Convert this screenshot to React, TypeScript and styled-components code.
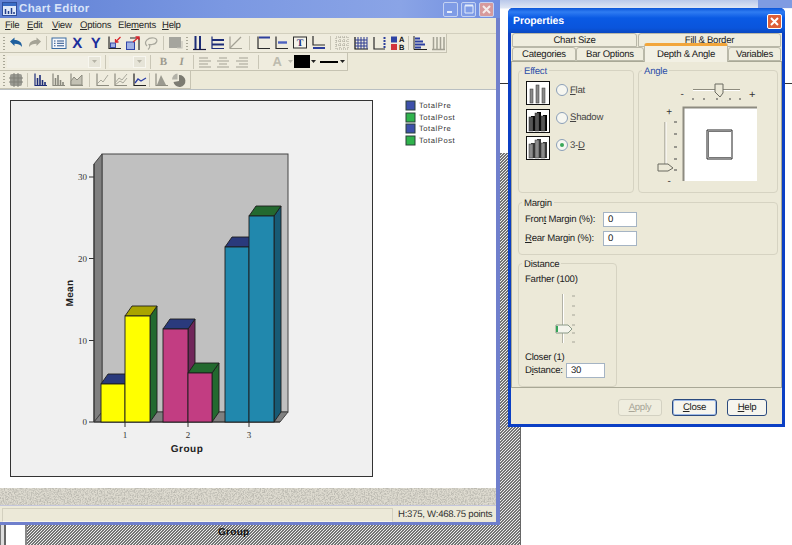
import React from "react";
import styled, { createGlobalStyle } from "styled-components";

const UI = `"Liberation Sans", Arial, sans-serif`;
const NAVY = "#1c2c78";
const DIM = "#a3a194";

const Global = createGlobalStyle`
  html, body { margin: 0; padding: 0; background: #fff; }
  * { box-sizing: border-box; }
  u { text-underline-offset: 1px; }
`;

const Desktop = styled.div`
  position: relative;
  width: 792px;
  height: 545px;
  overflow: hidden;
  background: #fff;
  font-family: ${UI};
  font-size: 9.6px;
  letter-spacing: -0.26px;
  text-rendering: geometricPrecision;
  color: #222;
`;

const BackTopStrip = styled.div`
  position: absolute;
  left: 500px;
  top: 0;
  width: 292px;
  height: 84px;
  border-bottom: 1px solid #333;
  background: linear-gradient(#b9c8ea 0, #dfe6f4 8px, #fff 9px);
`;

const BackTopButton = styled.div`
  position: absolute;
  left: 758px;
  top: 0;
  width: 34px;
  height: 8px;
  background: #7f9be2;
`;

const BackHatch = styled.div`
  position: absolute;
  left: 27px;
  top: 153px;
  width: 494px;
  height: 392px;
  border-right: 1px solid #666;
  background: repeating-linear-gradient(135deg, #747474 0 0.95px, #eeeeee 0.95px 2.1213px);
  display: flex;
  align-items: flex-end;
`;

const BackCaption = styled.span`
  width: 100%;
  padding: 0 0 7px 191px;
  font: bold 10px ${UI};
  letter-spacing: 0.3px;
  color: #111;
`;

const BackEdge = styled.div`
  position: absolute;
  left: 0;
  top: 525px;
  width: 27px;
  height: 20px;
  background: linear-gradient(90deg, #777 0 1px, #ddd 1px 4px, #666 4px 6px, #fff 6px 25px, #888 25px 27px);
`;

const MainWindow = styled.section`
  position: absolute;
  left: 0;
  top: 0;
  width: 500px;
  height: 525px;
  display: flex;
  flex-direction: column;
`;

const MainTitle = styled.header`
  height: 18px;
  flex: none;
  display: flex;
  align-items: center;
  padding-left: 2px;
  background: linear-gradient(90deg, #5f80d4 0, #7b98e2 45%, #8aa4e6 80%, #6f8de0 100%);
`;

const TitleText = styled.span`
  margin-left: 2px;
  font: bold 11.5px ${UI};
  letter-spacing: 0.35px;
  color: #d9e4f8;
`;

const TitleButtons = styled.div`
  margin-left: auto;
  padding-right: 6px;
  display: flex;
  gap: 3px;
`;

const CapButton = styled.span<{ $close?: boolean }>`
  width: 15px;
  height: 15px;
  border-radius: 2px;
  border: 1px solid #c4d2f2;
  display: flex;
  align-items: center;
  justify-content: center;
  background: ${(p) => (p.$close ? "#d79a9c" : "#7f9ce6")};
`;

const MainBody = styled.div`
  flex: 1;
  min-height: 0;
  display: flex;
  flex-direction: column;
  border-right: 4px solid #6f7fcc;
  border-bottom: 3px solid #6f7fcc;
  background: #ece9d8;
`;

const MenuBar = styled.nav`
  height: 16px;
  flex: none;
  display: flex;
  align-items: center;
  border-bottom: 1px solid #d2cfbe;
`;

const MenuItem = styled.span<{ $w: number }>`
  width: ${(p) => p.$w}px;
  padding-left: 5px;
  color: #2a2a2a;
`;

const ToolRow = styled.div<{ $h: number }>`
  height: ${(p) => p.$h}px;
  flex: none;
  display: flex;
`;

const Band = styled.div<{ $w: number }>`
  width: ${(p) => p.$w}px;
  display: flex;
  align-items: center;
  padding-left: 2px;
  background: #efecde;
  border-right: 1px solid #c6c3b2;
  border-bottom: 1px solid #c6c3b2;
`;

const Grip = styled.span`
  width: 5px;
  height: 13px;
  flex: none;
  background: repeating-linear-gradient(#a9a797 0 1px, transparent 1px 3px) 1px 0 / 2px 100% no-repeat;
`;

const Tool = styled.span<{ $w?: number }>`
  width: ${(p) => p.$w ?? 18.4}px;
  height: 16px;
  flex: none;
  display: flex;
  align-items: center;
  justify-content: center;
`;

const ToolGap = styled.span<{ $w: number }>`
  width: ${(p) => p.$w}px;
  height: 14px;
  flex: none;
  background: linear-gradient(#c9c6b6, #c9c6b6) center / 1px 100% no-repeat;
`;

const Combo = styled.span<{ $w: number }>`
  width: ${(p) => p.$w}px;
  height: 12px;
  flex: none;
  display: flex;
  justify-content: flex-end;
  background: #f1efe5;
`;

const ComboArrow = styled.span`
  width: 13px;
  height: 100%;
  display: flex;
  align-items: center;
  justify-content: center;
  background: #e6e4d8;
  border: 1px solid #f7f6ef;
`;

const FontTool = styled(Tool)<{ $italic?: boolean; $sans?: boolean }>`
  font: ${(p) => (p.$italic ? "italic" : "normal")} bold ${(p) => (p.$sans ? "13px" : "11px")}
    ${(p) => (p.$sans ? UI : `"Liberation Serif", serif`)};
  color: ${(p) => (p.$sans ? "#bdbbae" : "#9d9b8e")};
`;

const AxisLetter = styled(Tool)`
  font: bold 15px ${UI};
  letter-spacing: 0;
  color: #1c2f9c;
`;

const ColourChip = styled.span`
  width: 16px;
  height: 13px;
  flex: none;
  background: #000;
`;

const ChartPane = styled.div`
  height: 399px;
  flex: none;
  background: #fff;
  border-top: 1px solid #b9bfc2;
  overflow: hidden;
`;

const NoiseStrip = styled.div`
  height: 17px;
  flex: none;
  overflow: hidden;
  background: #d4d1c6;
  svg { display: block; }
`;

const StatusBar = styled.footer`
  flex: 1;
  display: flex;
  padding: 2px 0 0 2px;
  border-top: 1px solid #c4c6dc;
`;

const StatusWell = styled.span`
  flex: 1;
  border: 1px solid #d3d0bf;
  border-bottom-color: #f6f5ec;
`;

const StatusText = styled.span`
  width: 103px;
  padding-left: 5px;
  line-height: 13px;
  white-space: nowrap;
  color: #333;
`;

/* ---------- Properties dialog ---------- */

const Dialog = styled.section`
  position: absolute;
  left: 508px;
  top: 8px;
  width: 277px;
  height: 419px;
  display: flex;
  flex-direction: column;
  border: 3px solid #0b3fc4;
  border-top: 0;
  border-radius: 5px 5px 0 0;
  background: #ece9d8;
`;

const DialogTitle = styled.header`
  height: 25px;
  flex: none;
  margin: 0 -3px;
  padding: 0 3px 0 5px;
  display: flex;
  align-items: center;
  justify-content: space-between;
  border-radius: 5px 5px 0 0;
  background: linear-gradient(#0a54d8 0, #2f7cf2 4px, #0a5ae4 10px, #0a55dc 20px, #0a48c0 25px);
  font: bold 10.5px ${UI};
  letter-spacing: -0.1px;
  color: #fff;
`;

const DialogClose = styled.span`
  width: 15px;
  height: 15px;
  margin-top: 2px;
  border-radius: 2px;
  border: 1px solid #fff;
  display: flex;
  align-items: center;
  justify-content: center;
  background: #de5f38;
`;

const TabRows = styled.div`
  flex: none;
  padding: 0 1px;
  display: flex;
  flex-direction: column;
`;

const TabRow = styled.div<{ $gap: number }>`
  height: 14px;
  display: flex;
  align-items: flex-end;
  gap: ${(p) => p.$gap}px;
`;

const Tab = styled.span<{ $w: number; $active?: boolean }>`
  width: ${(p) => p.$w}px;
  height: ${(p) => (p.$active ? 19 : 14)}px;
  margin-bottom: ${(p) => (p.$active ? -1 : 0)}px;
  flex: none;
  display: flex;
  align-items: center;
  justify-content: center;
  z-index: ${(p) => (p.$active ? 1 : 0)};
  border: 1px solid #b9b8a8;
  border-bottom: ${(p) => (p.$active ? "0" : "1px solid #b9b8a8")};
  border-top: ${(p) => (p.$active ? "3px solid #f2a63a" : "1px solid #b9b8a8")};
  border-radius: 3px 3px 0 0;
  background: ${(p) => (p.$active ? "#f2f0e4" : "#efedde")};
  color: #222;
`;

const Panel = styled.div`
  height: 327px;
  flex: none;
  padding: 8px 5px 0 6px;
  display: flex;
  flex-direction: column;
  border: 1px solid #a9a896;
  background: #ece9d8;
`;

const GroupRow = styled.div`
  display: flex;
  gap: 4px;
`;

const Group = styled.div<{ $w: number; $h: number; $gapTop?: number }>`
  width: ${(p) => p.$w}px;
  height: ${(p) => p.$h}px;
  margin-top: ${(p) => p.$gapTop ?? 0}px;
  flex: none;
  border: 1px solid #d6d3c2;
  border-radius: 4px;
`;

const GroupTitle = styled.div<{ $blue?: boolean }>`
  width: fit-content;
  height: 13px;
  margin: -6px 0 0 3px;
  padding: 0 2px;
  line-height: 13px;
  background: #ece9d8;
  color: ${(p) => (p.$blue ? "#2d4fa8" : "#222")};
`;

const EffectList = styled.div`
  padding: 3px 0 0 7px;
  display: flex;
  flex-direction: column;
  gap: 3.5px;
`;

const EffectRow = styled.label`
  height: 24px;
  display: flex;
  align-items: center;
`;

const Radio = styled.span<{ $on?: boolean }>`
  width: 12px;
  height: 12px;
  margin: -6px 2px 0 6px;
  flex: none;
  display: flex;
  align-items: center;
  justify-content: center;
  border: 1px solid #8b9fb8;
  border-radius: 50%;
  background: #f6f6f0;
  &::after {
    content: "";
    width: 4px;
    height: 4px;
    border-radius: 50%;
    background: ${(p) => (p.$on ? "#3aa85a" : "transparent")};
  }
`;

const RadioText = styled.span`
  margin-top: -6px;
  color: #444;
`;

const WidgetSvg = styled.svg`
  display: block;
`;

const FieldRows = styled.div`
  padding: 2px 0 0 6px;
  display: flex;
  flex-direction: column;
  gap: 4px;
`;

const FieldRow = styled.div`
  display: flex;
  align-items: center;
`;

const FieldLabel = styled.span<{ $w: number }>`
  width: ${(p) => p.$w}px;
  flex: none;
  white-space: nowrap;
`;

const NumberBox = styled.span<{ $w: number }>`
  width: ${(p) => p.$w}px;
  height: 15px;
  flex: none;
  padding-left: 4px;
  line-height: 13px;
  background: #fff;
  border: 1px solid #a5b4c4;
`;

const DistanceBody = styled.div`
  padding: 2px 0 0 6px;
`;

const PlainLine = styled.div<{ $h: number }>`
  height: ${(p) => p.$h}px;
  line-height: 13px;
  white-space: nowrap;
`;

const DialogFooter = styled.div`
  flex: 1;
  padding: 11px 15px 0 0;
  display: flex;
  justify-content: flex-end;
  gap: 10px;
`;

const PushButton = styled.span<{ $w: number; $variant?: "off" | "main" }>`
  width: ${(p) => p.$w}px;
  height: 17px;
  display: flex;
  align-items: center;
  justify-content: center;
  border-radius: 3px;
  color: ${(p) => (p.$variant === "off" ? "#a8a698" : "#222")};
  background: ${(p) => (p.$variant === "off" ? "#efedde" : "#f6f5ee")};
  border: 1px solid ${(p) => (p.$variant === "off" ? "#d3d1c2" : "#2b4a7e")};
  box-shadow: ${(p) => (p.$variant === "main" ? "inset 0 0 0 1px #9db9e6" : "none")};
`;

/* ---------- toolbar icons ---------- */

const Ax = ({ c = NAVY }: { c?: string }) => <path d="M3 1.5V13.5H15" fill="none" stroke={c} strokeWidth="1.2" />;

const bars = (c: string) => (
  <>
    <Ax c={c} />
    <path d="M5.5 6V13M8 3V13M10.5 8V13M13 10V13" stroke={c} strokeWidth="1.6" />
  </>
);

const icons: Record<string, React.ReactNode> = {
  undo: <path d="M2 6.5L6.5 2.5V5C11 5 14 7 14 12C12.5 9.5 10 8.8 6.5 8.8V11Z" fill="#1f5f9e" />,
  redo: <path d="M14 6.5L9.5 2.5V5C5 5 2 7 2 12C3.5 9.5 6 8.8 9.5 8.8V11Z" fill="#a5a396" />,
  list: (
    <>
      <rect x="1" y="3" width="14" height="10.5" fill="#f5f7fb" stroke="#3a6aa0" />
      <path d="M3 6H4.5M6 6H13M3 8.3H4.5M6 8.3H13M3 10.8H4.5M6 10.8H13" stroke="#27508a" />
    </>
  ),
  inward: (
    <>
      <Ax c="#2b2b2b" />
      <rect x="4.5" y="8" width="5" height="4.5" fill="#9fb0e4" stroke="#3a4ca8" />
      <path d="M14.5 2L9.5 7M9.5 4V7H12.5" fill="none" stroke="#d8262c" strokeWidth="1.3" />
    </>
  ),
  outward: (
    <>
      <path d="M5 3H14V15" fill="none" stroke="#2b2b2b" strokeWidth="1.2" />
      <rect x="1.5" y="7" width="8" height="7.5" fill="#9fb0e4" stroke="#2f44a8" />
      <path d="M8 7L14 2M10.5 2H14V5" fill="none" stroke="#d8262c" strokeWidth="1.3" />
    </>
  ),
  lasso: <path d="M4 11C0 7 5 2 11 3C16 4 14 9 9 9.5C7.5 9.7 6 10 5.5 9M6 9.5C7.5 11 6.5 13 5 14.5" fill="none" stroke="#a8a79c" strokeWidth="1.2" />,
  box: (
    <>
      <rect x="2" y="2" width="12" height="11" fill="#a5a59e" />
      <path d="M10 13H15V6" fill="none" stroke="#c5c4ba" strokeWidth="1.2" />
    </>
  ),
  axisBars: (
    <>
      <path d="M2 14.5H15" stroke="#1b1b40" strokeWidth="1.2" />
      <path d="M4.5 1V14M9 1V14" stroke={NAVY} strokeWidth="2" />
    </>
  ),
  axisHBars: (
    <>
      <Ax />
      <path d="M3 5H15M3 9.5H15" stroke={NAVY} strokeWidth="1.8" />
    </>
  ),
  axisLine: (
    <>
      <Ax c={DIM} />
      <path d="M3 13L14 2" stroke={DIM} strokeWidth="1.2" />
    </>
  ),
  titleTop: (
    <>
      <Ax c="#2b2b2b" />
      <path d="M4 2.5H15" stroke="#2d3f9c" strokeWidth="2" />
    </>
  ),
  titleMid: (
    <>
      <Ax c="#2b2b2b" />
      <path d="M5 7.5H14" stroke="#4d62c0" strokeWidth="2.4" />
    </>
  ),
  textBox: (
    <>
      <rect x="1.5" y="2" width="13" height="11" fill="#f4f3ea" stroke="#2b2b2b" />
      <text x="8" y="11" textAnchor="middle" fontFamily="Liberation Serif" fontWeight="bold" fontSize="10" fill="#1c2c78">T</text>
    </>
  ),
  titleBottom: (
    <>
      <path d="M3 1V10H15" fill="none" stroke="#2b2b2b" strokeWidth="1.2" />
      <path d="M3 13H15" stroke="#2d3f9c" strokeWidth="2" />
    </>
  ),
  dotGrid: <path d="M2 2H14V14H2ZM2 6H14M2 10H14M6 2V14M10 2V14" fill="none" stroke={DIM} strokeDasharray="1 1" />,
  solidGrid: (
    <>
      <path d="M2 2V14H15" fill="none" stroke="#111" strokeWidth="1.2" />
      <path d="M2 5H14M2 8H14M2 11H14M5 2V14M8 2V14M11 2V14M14 2V14" fill="none" stroke="#2c3a90" />
    </>
  ),
  rightAxis: (
    <>
      <path d="M3 2V14H14" fill="none" stroke="#2b2b2b" strokeWidth="1.2" />
      <path d="M13.5 2V14" stroke="#2d3f9c" strokeWidth="2" strokeDasharray="2 1" />
    </>
  ),
  legend: (
    <>
      <rect x="1" y="1.5" width="6" height="6" fill="#2e44a4" />
      <rect x="1" y="9" width="6" height="6" fill="#d2343c" />
      <text x="11.5" y="7" textAnchor="middle" fontFamily="Liberation Sans" fontWeight="bold" fontSize="7.5" fill="#111">A</text>
      <text x="11.5" y="15" textAnchor="middle" fontFamily="Liberation Sans" fontWeight="bold" fontSize="7.5" fill="#111">B</text>
    </>
  ),
  stepBars: (
    <>
      <path d="M2 1V14.5H15" fill="none" stroke="#222" />
      <path d="M3 3.5H8M3 6.5H11M3 9.5H13M3 12.5H9" stroke="#2c3fa0" strokeWidth="1.8" />
    </>
  ),
  grayBars: <path d="M2 14.5H15M3.5 2V14M7 2V14M10.5 2V14M14 2V14" fill="none" stroke={DIM} strokeWidth="1.5" />,
  blob: (
    <>
      <rect x="2" y="2" width="12" height="12" rx="2" fill="#9a9a92" />
      <path d="M1 6H15M1 10H15M6 1V15M10 1V15" stroke="#808078" />
    </>
  ),
  barsOn: bars(NAVY),
  barsOff: bars("#88877c"),
  areaOff: (
    <>
      <Ax c="#8d8c80" />
      <path d="M3 9L6 5L9 8L14 3V13H3Z" fill="#c3c1b4" stroke="#8d8c80" />
    </>
  ),
  lineOff: (
    <>
      <Ax c="#8d8c80" />
      <path d="M3 12L7 8L9 10L14 3" fill="none" stroke="#a9a89c" />
    </>
  ),
  linesOff: (
    <>
      <Ax c="#8d8c80" />
      <path d="M3 11L7 6L10 8L15 2M3 13L8 9L11 11L15 6" fill="none" stroke="#a9a89c" />
    </>
  ),
  lineOn: (
    <>
      <Ax c="#222" />
      <path d="M4 11L7 7L10 9L15 6" fill="none" stroke="#2d3fa8" strokeWidth="1.3" />
    </>
  ),
  triangle: (
    <>
      <Ax c="#8d8c80" />
      <path d="M4 13L8 3L13 13Z" fill="#9b9a90" />
    </>
  ),
  pie: (
    <>
      <path d="M8 3A6 6 0 1 1 2.5 10L8 9Z" fill="#7c7b72" />
      <path d="M6.5 1.5V7.5H1A6 6 0 0 1 6.5 1.5Z" fill="#b3b2a8" />
    </>
  ),
};

const Icon = ({ name }: { name: string }) => (
  <Tool>
    <svg width="16" height="16" viewBox="0 0 16 16">{icons[name]}</svg>
  </Tool>
);

const Arrow = ({ c = "#222" }: { c?: string }) => (
  <svg width="5" height="3" viewBox="0 0 5 3">
    <path d="M0 0H5L2.5 3Z" fill={c} />
  </svg>
);

const Lines = ({ rows }: { rows: string[] }) => (
  <Tool>
    <svg width="14" height="12" viewBox="0 0 14 12">
      <path d={rows.join("")} stroke="#a3a194" strokeWidth="1" fill="none" />
    </svg>
  </Tool>
);

/* ---------- chart ---------- */

type Bar = { x0: number; x1: number; top: number; face: string; cap: string; side: string };

const BASE = 422;
const DX = 7;
const DY = 10;

const chartBars: Bar[] = [
  { x0: 101, x1: 125, top: 384, face: "#ffff00", cap: "#2a3a7c", side: "#2a3a7c" },
  { x0: 125, x1: 150, top: 316, face: "#ffff00", cap: "#a9a400", side: "#23692f" },
  { x0: 163, x1: 188, top: 329, face: "#c23d82", cap: "#2a3a7c", side: "#70265a" },
  { x0: 188, x1: 212, top: 373, face: "#c23d82", cap: "#23692f", side: "#23692f" },
  { x0: 225, x1: 249, top: 247, face: "#2188ad", cap: "#2a3a7c", side: "#2a3a7c" },
  { x0: 249, x1: 274, top: 216, face: "#2188ad", cap: "#23692f", side: "#175a75" },
];

const legendRows = [
  { y: 101, label: "TotalPre", c: "#3d50aa" },
  { y: 113, label: "TotalPost", c: "#2fb34c" },
  { y: 124, label: "TotalPre", c: "#3d50aa" },
  { y: 136, label: "TotalPost", c: "#2fb34c" },
];

const ChartSvg = styled.svg`
  display: block;
  letter-spacing: 0;
`;

const Chart = () => (
  <ChartSvg width="496" height="398" viewBox="0 90 496 398">
    <rect x="10.5" y="100.5" width="362" height="376" fill="#f0f0f0" stroke="#333" />
    <rect x="102" y="154" width="186" height="258" fill="#c0c0c0" stroke="#444" />
    <path d="M94 164L102 154V412L94 422Z" fill="#808080" stroke="#444" />
    <path d="M94 422L102 412H288L280 422Z" fill="#808080" stroke="#444" />
    <path d="M94 164V422H280" fill="none" stroke="#333" />
    {[177, 258.5, 340.5, 422].map((y, i) => (
      <g key={y}>
        <path d={`M89 ${y}H94`} stroke="#333" />
        <text x="87" y={y + 3} textAnchor="end" fontFamily="Liberation Serif" fontSize="9" fill="#333">
          {[30, 20, 10, 0][i]}
        </text>
      </g>
    ))}
    {chartBars.map((b) => (
      <g key={b.x0} stroke="#1d1d1d" strokeWidth="0.9">
        <path d={`M${b.x1} ${BASE}V${b.top}L${b.x1 + DX} ${b.top - DY}V${BASE - DY}Z`} fill={b.side} />
        <path d={`M${b.x0} ${b.top}L${b.x0 + DX} ${b.top - DY}H${b.x1 + DX}L${b.x1} ${b.top}Z`} fill={b.cap} />
        <rect x={b.x0} y={b.top} width={b.x1 - b.x0} height={BASE - b.top} fill={b.face} />
      </g>
    ))}
    {[
      { x: 125, t: "1" },
      { x: 188, t: "2" },
      { x: 249, t: "3" },
    ].map((c) => (
      <g key={c.t}>
        <path d={`M${c.x} 422V427`} stroke="#333" />
        <text x={c.x} y="438" textAnchor="middle" fontFamily="Liberation Serif" fontSize="9" fill="#333">
          {c.t}
        </text>
      </g>
    ))}
    <text x="187" y="452" textAnchor="middle" fontFamily="Liberation Sans" fontWeight="bold" fontSize="10" letterSpacing="0.5" fill="#222">
      Group
    </text>
    <text transform="translate(72.5 293) rotate(-90)" textAnchor="middle" fontFamily="Liberation Sans" fontWeight="bold" fontSize="10" letterSpacing="0.4" fill="#222">
      Mean
    </text>
    {legendRows.map((r, i) => (
      <g key={i}>
        <rect x="406" y={r.y} width="9" height="9" fill={r.c} stroke="#2a4038" />
        <text x="419" y={r.y + 7} fontFamily="Liberation Sans" fontSize="7.6" letterSpacing="0.55" fill="#333">
          {r.label}
        </text>
      </g>
    ))}
  </ChartSvg>
);

/* ---------- dialog widgets ---------- */

const Thumb = ({ kind }: { kind: "flat" | "shadow" | "solid" }) => {
  const heights = [14, 18, 15];
  const face = kind === "flat" ? "#8a8a8a" : kind === "shadow" ? "#555" : "#8c8c8c";
  const back = kind === "shadow" ? "#000" : "#3a3a3a";
  return (
    <WidgetSvg width="24" height="24" viewBox="0 0 24 24">
      <rect x="0.5" y="0.5" width="23" height="23" fill="#fff" stroke="#111" />
      {heights.map((h, i) => {
        const x = 4 + i * 6;
        return (
          <g key={i}>
            {kind !== "flat" && <rect x={x + 1} y={22 - h - 1} width="4" height={h + 1} fill={back} />}
            <rect x={x - (kind === "flat" ? 0 : 1)} y={22 - h} width={kind === "flat" ? 3 : 4} height={h} fill={face} stroke="#333" strokeWidth="0.5" />
          </g>
        );
      })}
    </WidgetSvg>
  );
};

const AngleWidget = () => (
  <WidgetSvg width="138" height="111" viewBox="638 78 138 111">
    <path d="M692 89.5H739" stroke="#8d8b7e" />
    <path d="M692 90.5H739" stroke="#fff" />
    <path d="M714 84H722V93L719 97L714 92Z" fill="#ece9d8" stroke="#6b6a60" />
    {[692, 703, 716, 729, 739].map((x) => (
      <path key={x} d={`M${x} 98V100`} stroke="#444" />
    ))}
    <text x="681" y="97" textAnchor="middle" fontSize="10" fontFamily="Liberation Sans" fill="#333">-</text>
    <text x="751" y="98" textAnchor="middle" fontSize="11" fontFamily="Liberation Sans" fill="#333">+</text>
    <rect x="682" y="107" width="74" height="74" fill="#fff" />
    <path d="M682.5 181V107.500H756" fill="none" stroke="#8d8b80" strokeWidth="2" />
    <path d="M706 130H731V159H706Z" fill="#fff" stroke="#222" />
    <path d="M707.500 131.500V157.500H730M707 131.500H730" fill="none" stroke="#777" />
    <path d="M664 122V168" stroke="#8d8b7e" />
    <path d="M665 122V168" stroke="#fff" />
    <path d="M657 164H667L672 168L667 171H657Z" fill="#ece9d8" stroke="#6b6a60" />
    {[122, 134, 147, 159, 170].map((y) => (
      <path key={y} d={`M673 ${y}H676`} stroke="#444" />
    ))}
    <text x="668" y="115" textAnchor="middle" fontSize="10" fontFamily="Liberation Sans" fill="#333">+</text>
    <text x="668" y="184" textAnchor="middle" fontSize="10" fontFamily="Liberation Sans" fill="#333">-</text>
  </WidgetSvg>
);

const DistanceSlider = () => (
  <WidgetSvg width="60" height="65" viewBox="524 286 60 65">
    <path d="M561.500 294V343" stroke="#b3b2a6" />
    <path d="M562.500 294V343" stroke="#fff" />
    <path d="M555 325H567L571 329L567 333H555Z" fill="#f4f4ec" stroke="#8a9a88" />
    <path d="M556 326V332" stroke="#35a558" strokeWidth="2" />
    {[296, 306, 315, 325, 333, 342].map((y) => (
      <path key={y} d={`M571 ${y}H574`} stroke="#a5a498" />
    ))}
  </WidgetSvg>
);

const Cross = ({ c = "#fff" }: { c?: string }) => (
  <svg width="9" height="9" viewBox="0 0 9 9">
    <path d="M1 1L8 8M8 1L1 8" stroke={c} strokeWidth="2" />
  </svg>
);

export default function App() {
  return (
    <Desktop>
      <Global />
      <BackTopStrip />
      <BackTopButton />
      <BackHatch>
        <BackCaption>Group</BackCaption>
      </BackHatch>
      <BackEdge />

      <MainWindow>
        <MainTitle>
          <svg width="15" height="14" viewBox="0 0 15 14">
            <rect x="0.500" y="0.500" width="14" height="13" fill="#dfe8f8" stroke="#2f4f9c" />
            <rect x="1" y="1" width="13" height="3" fill="#3a6cc4" />
            <path d="M3.500 12V7M6.500 12V9M9.500 12V6M12 12V10" stroke="#24408c" strokeWidth="1.500" />
          </svg>
          <TitleText>Chart Editor</TitleText>
          <TitleButtons>
            <CapButton>
              <svg width="9" height="9" viewBox="0 0 9 9">
                <rect x="1" y="6" width="5" height="2" fill="#e4ecfb" />
              </svg>
            </CapButton>
            <CapButton>
              <svg width="10" height="10" viewBox="0 0 10 10">
                <path d="M1 1.500H9V9H1Z" fill="none" stroke="#e4ecfb" />
                <path d="M1 1.500H9" stroke="#e4ecfb" strokeWidth="2" />
              </svg>
            </CapButton>
            <CapButton $close>
              <Cross c="#f5ecec" />
            </CapButton>
          </TitleButtons>
        </MainTitle>

        <MainBody>
          <MenuBar>
            <MenuItem $w={22}><u>F</u>ile</MenuItem>
            <MenuItem $w={25}><u>E</u>dit</MenuItem>
            <MenuItem $w={28}><u>V</u>iew</MenuItem>
            <MenuItem $w={38}><u>O</u>ptions</MenuItem>
            <MenuItem $w={44}>Ele<u>m</u>ents</MenuItem>
            <MenuItem $w={40}><u>H</u>elp</MenuItem>
          </MenuBar>

          <ToolRow $h={19}>
            <Band $w={447}>
              <Grip />
              <Icon name="undo" />
              <Icon name="redo" />
              <ToolGap $w={6} />
              <Icon name="list" />
              <AxisLetter>X</AxisLetter>
              <AxisLetter>Y</AxisLetter>
              {["inward", "outward", "lasso"].map((n) => <Icon key={n} name={n} />)}
              <ToolGap $w={6} />
              <Icon name="box" />
              <Grip />
              {["axisBars", "axisHBars", "axisLine"].map((n) => <Icon key={n} name={n} />)}
              <ToolGap $w={9} />
              {["titleTop", "titleMid", "textBox", "titleBottom"].map((n) => <Icon key={n} name={n} />)}
              <ToolGap $w={6} />
              {["dotGrid", "solidGrid", "rightAxis", "legend"].map((n) => <Icon key={n} name={n} />)}
              <ToolGap $w={4} />
              {["stepBars", "grayBars"].map((n) => <Icon key={n} name={n} />)}
            </Band>
          </ToolRow>

          <ToolRow $h={18}>
            <Band $w={348}>
              <Grip />
              <Combo $w={94}>
                <ComboArrow><Arrow c="#b5b3a6" /></ComboArrow>
              </Combo>
              <ToolGap $w={8} />
              <Combo $w={37}>
                <ComboArrow><Arrow c="#b5b3a6" /></ComboArrow>
              </Combo>
              <ToolGap $w={8} />
              <FontTool>B</FontTool>
              <FontTool $italic>I</FontTool>
              <ToolGap $w={5} />
              <Lines rows={["M1 2H10", "M1 5H13", "M1 8H10", "M1 11H13"]} />
              <Lines rows={["M3 2H11", "M1 5H13", "M3 8H11", "M1 11H13"]} />
              <Lines rows={["M4 2H13", "M1 5H13", "M4 8H13", "M1 11H13"]} />
              <ToolGap $w={15} />
              <FontTool $sans $w={22}>A</FontTool>
              <Tool $w={6}><Arrow c="#bdbbae" /></Tool>
              <ColourChip />
              <Tool $w={8}><Arrow /></Tool>
              <Tool $w={22}>
                <svg width="18" height="2" viewBox="0 0 18 2"><rect width="18" height="2" fill="#000" /></svg>
              </Tool>
              <Tool $w={6}><Arrow /></Tool>
            </Band>
          </ToolRow>

          <ToolRow $h={18}>
            <Band $w={191}>
              <Grip />
              <Icon name="blob" />
              <ToolGap $w={5} />
              {["barsOn", "barsOff", "areaOff"].map((n) => <Icon key={n} name={n} />)}
              <ToolGap $w={7} />
              {["lineOff", "linesOff", "lineOn"].map((n) => <Icon key={n} name={n} />)}
              <ToolGap $w={4} />
              {["triangle", "pie"].map((n) => <Icon key={n} name={n} />)}
            </Band>
          </ToolRow>

          <ChartPane>
            <Chart />
          </ChartPane>

          <NoiseStrip>
            <svg width="496" height="17">
              <filter id="stipple">
                <feTurbulence type="fractalNoise" baseFrequency="0.7" numOctaves="2" seed="4" />
                <feColorMatrix values="0 0 0 0 0.5  0 0 0 0 0.49  0 0 0 0 0.44  3 0 0 0 -1.15" />
              </filter>
              <rect width="496" height="17" fill="#dedbd0" />
              <rect width="496" height="17" filter="url(#stipple)" />
            </svg>
          </NoiseStrip>

          <StatusBar>
            <StatusWell />
            <StatusText>H:375, W:468.75 points</StatusText>
          </StatusBar>
        </MainBody>
      </MainWindow>

      <Dialog>
        <DialogTitle>
          Properties
          <DialogClose><Cross /></DialogClose>
        </DialogTitle>
        <TabRows>
          <TabRow $gap={1}>
            <Tab $w={125}>Chart Size</Tab>
            <Tab $w={143}>Fill &amp; Border</Tab>
          </TabRow>
          <TabRow $gap={0}>
            <Tab $w={64}>Categories</Tab>
            <Tab $w={68}>Bar Options</Tab>
            <Tab $w={84} $active>Depth &amp; Angle</Tab>
            <Tab $w={53}>Variables</Tab>
          </TabRow>
        </TabRows>
        <Panel>
          <GroupRow>
            <Group $w={116} $h={123}>
              <GroupTitle $blue>Effect</GroupTitle>
              <EffectList>
                <EffectRow><Thumb kind="flat" /><Radio /><RadioText><u>F</u>lat</RadioText></EffectRow>
                <EffectRow><Thumb kind="shadow" /><Radio /><RadioText><u>S</u>hadow</RadioText></EffectRow>
                <EffectRow><Thumb kind="solid" /><Radio $on /><RadioText>3-<u>D</u></RadioText></EffectRow>
              </EffectList>
            </Group>
            <Group $w={140} $h={123}>
              <GroupTitle $blue>Angle</GroupTitle>
              <AngleWidget />
            </Group>
          </GroupRow>
          <Group $w={260} $h={53} $gapTop={9}>
            <GroupTitle>Margin</GroupTitle>
            <FieldRows>
              <FieldRow><FieldLabel $w={78}>Fron<u>t</u> Margin (%):</FieldLabel><NumberBox $w={34}>0</NumberBox></FieldRow>
              <FieldRow><FieldLabel $w={78}><u>R</u>ear Margin (%):</FieldLabel><NumberBox $w={34}>0</NumberBox></FieldRow>
            </FieldRows>
          </Group>
          <Group $w={99} $h={124} $gapTop={8}>
            <GroupTitle>Distance</GroupTitle>
            <DistanceBody>
              <PlainLine $h={13}>Farther (100)</PlainLine>
              <DistanceSlider />
              <PlainLine $h={12}>Closer (1)</PlainLine>
              <FieldRow>
                <FieldLabel $w={41}>D<u>i</u>stance:</FieldLabel>
                <NumberBox $w={39}>30</NumberBox>
              </FieldRow>
            </DistanceBody>
          </Group>
        </Panel>
        <DialogFooter>
          <PushButton $w={44} $variant="off"><u>A</u>pply</PushButton>
          <PushButton $w={45} $variant="main"><u>C</u>lose</PushButton>
          <PushButton $w={40}><u>H</u>elp</PushButton>
        </DialogFooter>
      </Dialog>
    </Desktop>
  );
}
